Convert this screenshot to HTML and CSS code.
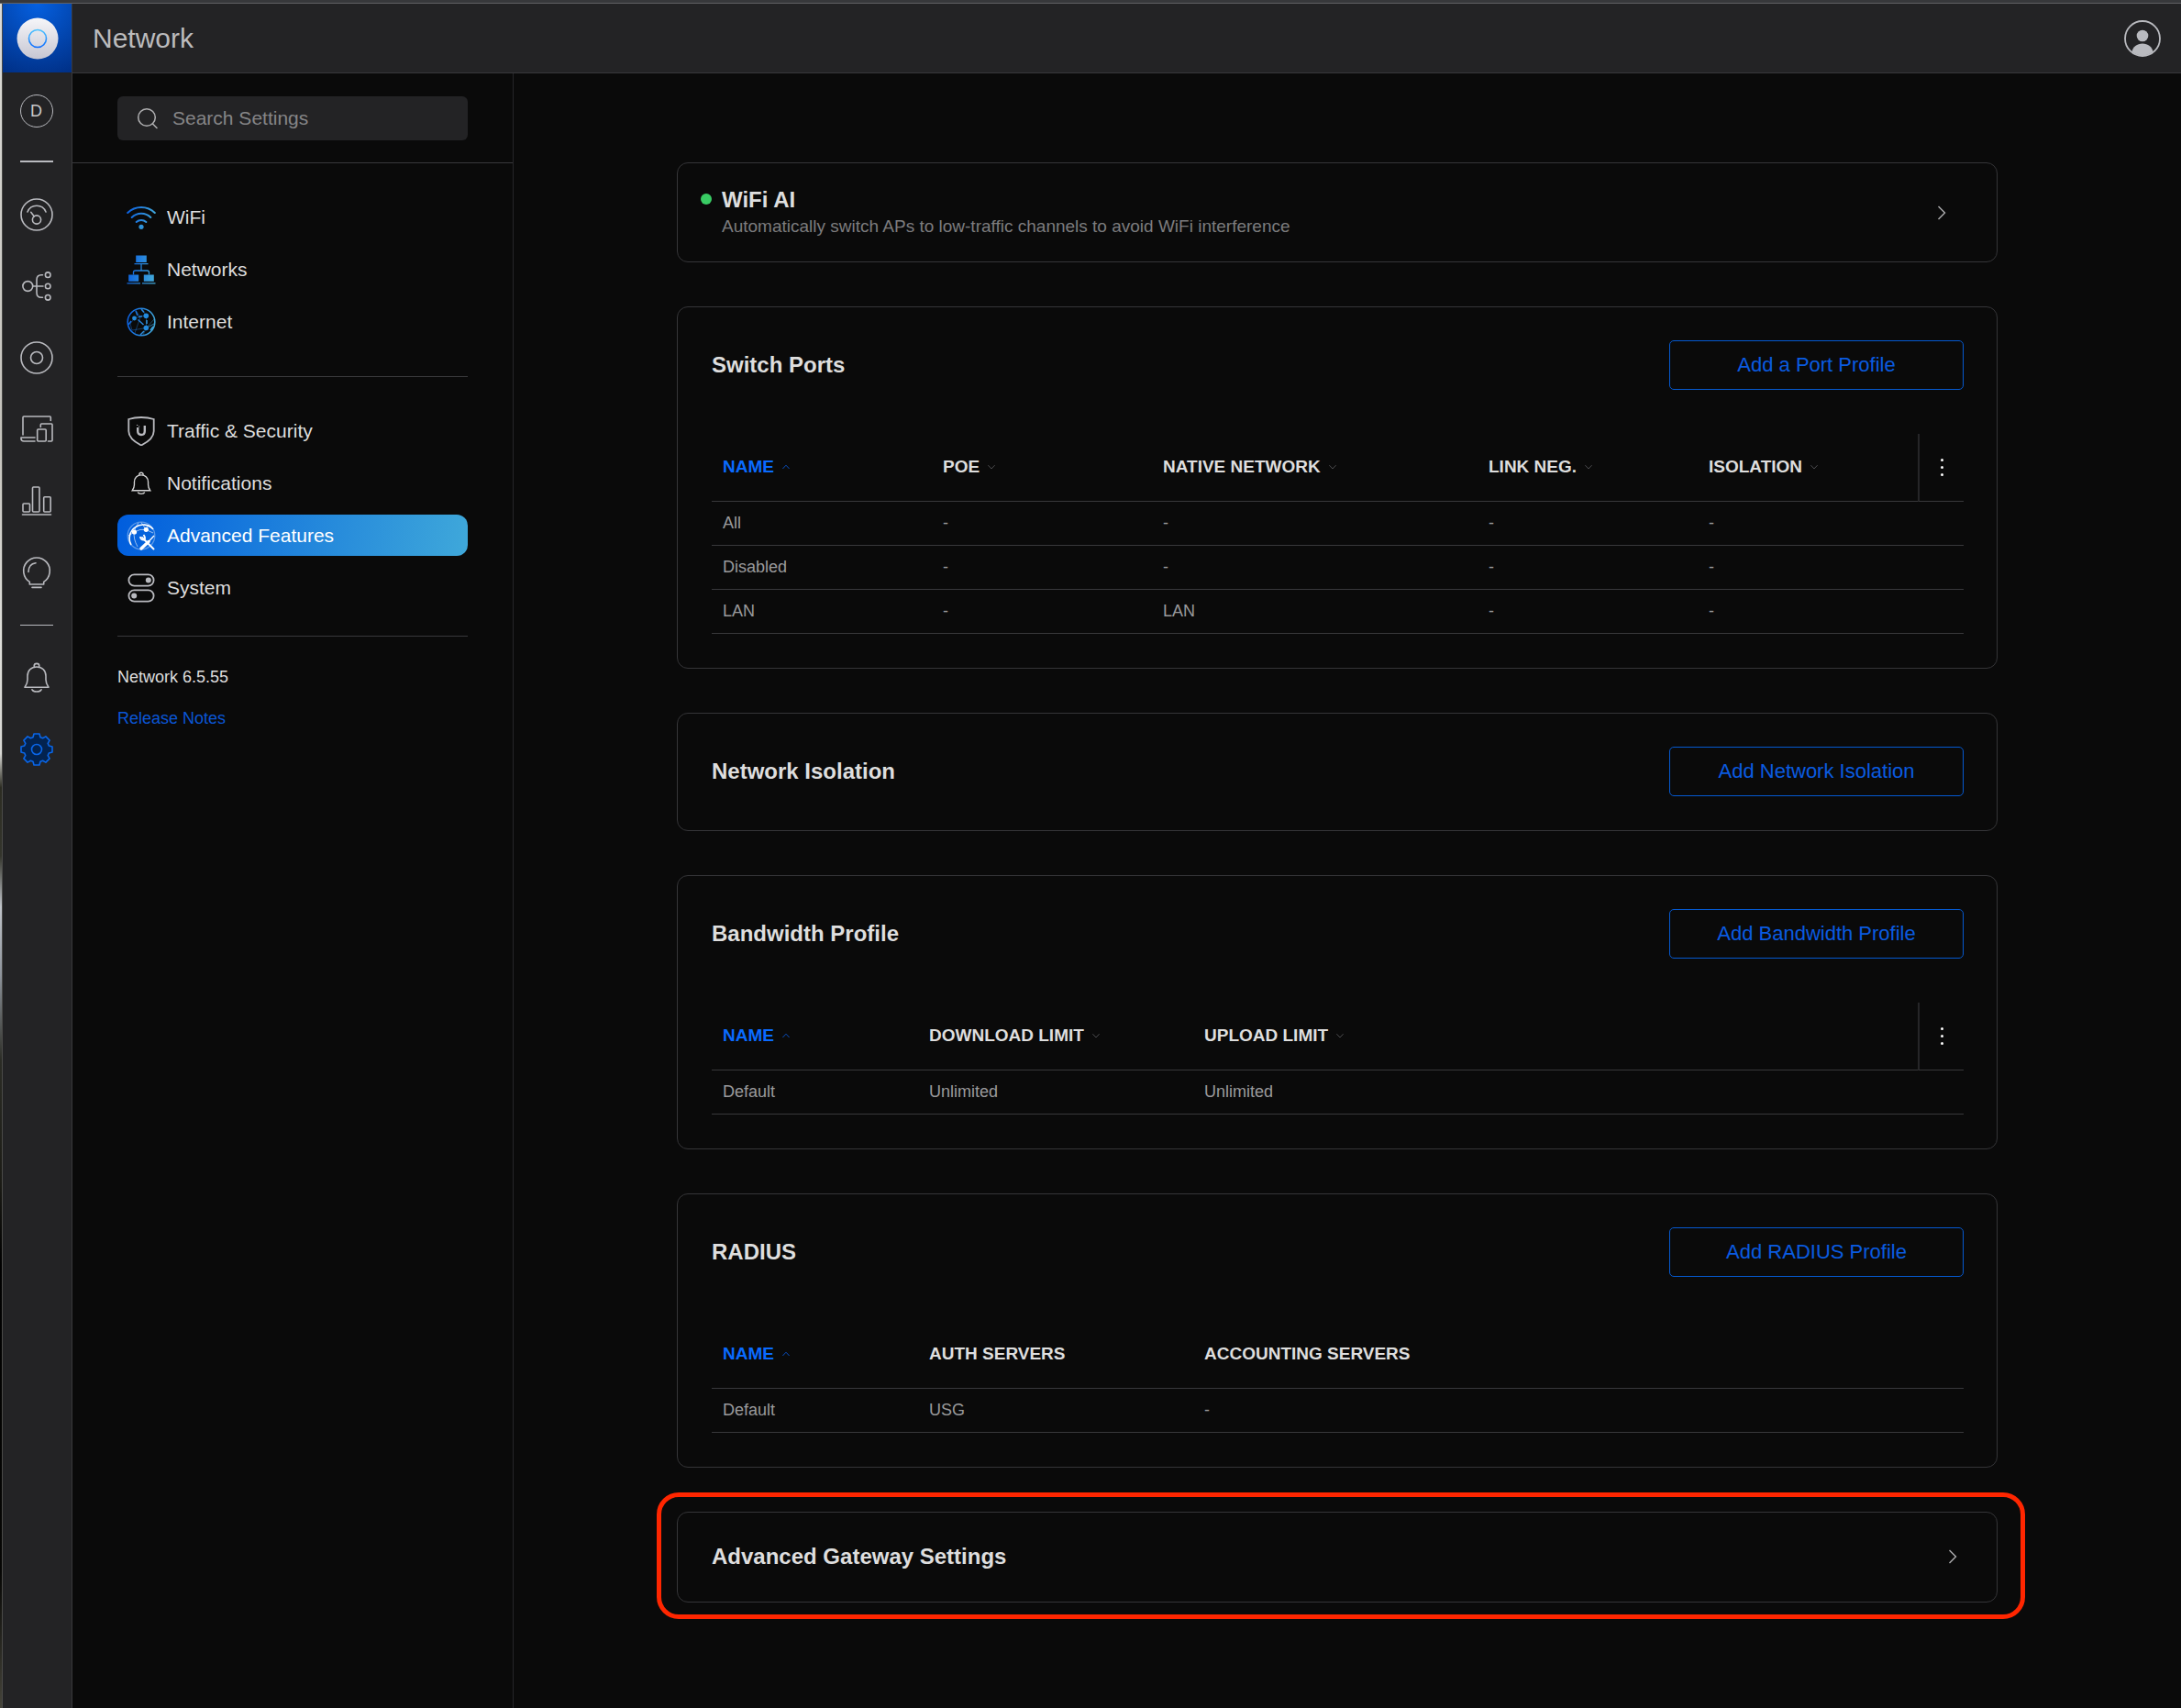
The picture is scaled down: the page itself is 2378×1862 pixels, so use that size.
FILE: index.html
```html
<!DOCTYPE html>
<html lang="en">
<head>
    <meta charset="UTF-8">
    <meta name="viewport" content="width=device-width, initial-scale=1.0">
    <title>Network - Advanced Features</title>
    <link rel="stylesheet" href="styles.css">
</head>
<body>
    <!-- Shared icons -->
    <svg class="sprite" aria-hidden="true">
        <defs>
            <linearGradient id="blue" gradientUnits="userSpaceOnUse" x1="-15" y1="0" x2="15" y2="4">
                <stop offset="0" stop-color="#0c62e0"/>
                <stop offset="1" stop-color="#42a9da"/>
            </linearGradient>
            <linearGradient id="ring" x1="0" y1="0" x2="0" y2="1">
                <stop offset="0" stop-color="#4cc3ff"/>
                <stop offset="1" stop-color="#0a6cff"/>
            </linearGradient>
            <linearGradient id="disc" x1="0" y1="0" x2="0" y2="1">
                <stop offset="0" stop-color="#f6f6f9"/>
                <stop offset="1" stop-color="#c6c6d2"/>
            </linearGradient>
        </defs>
        <symbol id="bell" viewBox="-18 -18 36 36">
            <path d="M-13 10.3H13C11 7.5 10 6 10 2V-2C10 -8 6 -12 0 -12S-10 -8 -10 -2V2C-10 6 -11 7.5 -13 10.3ZM-2.8 -12.2V-13A2.8 2.6 0 0 1 2.8 -13V-12.2M-5 12.8C-3.5 15.8 3.5 15.8 5 12.8"/>
        </symbol>
        <symbol id="chevron" viewBox="-12 -12 24 24">
            <path d="M-3.5 -7L3.5 0L-3.5 7"/>
        </symbol>
        <symbol id="caret-up" viewBox="-4 -4 8 8">
            <path d="M-3.6 2L0 -1.8L3.6 2"/>
        </symbol>
        <symbol id="caret-down" viewBox="-4 -4 8 8">
            <path d="M-3.6 -1.8L0 2L3.6 -1.8"/>
        </symbol>
    </svg>

    <div class="window-top"></div>
    <div class="app">
        <div class="window-edge"></div>

        <div class="rail">
            <a href="#" class="logo" aria-label="Home">
                <svg viewBox="-23 -23 46 46" width="46" height="46">
                    <circle r="22.5" fill="url(#disc)"/>
                    <circle r="9.5" fill="none" stroke="url(#ring)" stroke-width="1.6"/>
                </svg>
            </a>
            <nav class="rail-nav">
                <a href="#" class="site">D</a>
                <span class="rail-divider thick"></span>
                <div class="rail-group">
                    <a href="#" aria-label="Dashboard"><svg class="rail-icon" viewBox="-18 -18 36 36"><circle r="17"/><path d="M-10 -3A10.8 10.8 0 0 1 10 -3M-6.3 -2.7L-2.7 2"/><circle cy="5.5" r="4.6"/></svg></a>
                    <a href="#" aria-label="Topology"><svg class="rail-icon" viewBox="-18 -18 36 36"><circle cx="-9.7" r="5.4"/><path d="M-4.3 0H7M6.5 -12.3H5Q0 -12.3 0 -7V7Q0 12.3 5 12.3H6.5"/><circle cx="12.2" cy="-12.3" r="2.8"/><circle cx="12.2" r="2.8"/><circle cx="12.2" cy="12.3" r="2.8"/></svg></a>
                    <a href="#" aria-label="Devices"><svg class="rail-icon" viewBox="-18 -18 36 36"><circle r="17"/><circle r="6.5"/></svg></a>
                    <a href="#" aria-label="Clients"><svg class="rail-icon" viewBox="-18 -18 36 36"><path d="M-15 6V-13Q-15 -14 -14 -14H14.3Q15.3 -14 15.3 -13V-9.5M-2 9H-17V10Q-17 13 -14 13H-2M4.3 -2.5V-5Q4.3 -6 5.3 -6H16Q17 -6 17 -5V12Q17 13 16 13H12.5"/><rect x=".7" width="9.5" height="13" rx="1"/></svg></a>
                    <a href="#" aria-label="Statistics"><svg class="rail-icon" viewBox="-18 -18 36 36"><rect x="-15" y="3" width="7.5" height="9" rx="1"/><rect x="-4.5" y="-15" width="7.5" height="27" rx="1"/><rect x="7.7" y="-4.3" width="7.5" height="16.3" rx="1"/><path d="M-15.5 15H15.5"/></svg></a>
                    <a href="#" aria-label="Insights"><svg class="rail-icon" viewBox="-18 -18 36 36"><path d="M-7.7 13V10.3A14.3 14.3 0 1 1 7.7 10.3V13ZM-5 16.4H5M-9 -.5C-9 -6 -6 -9.5 -1 -10.2"/></svg></a>
                </div>
                <span class="rail-divider"></span>
                <div class="rail-group">
                    <a href="#" aria-label="Notifications"><svg class="rail-icon"><use href="#bell"/></svg></a>
                    <a href="#" aria-label="Settings"><svg class="rail-icon current" viewBox="-18 -18 36 36"><path d="M13.3 -4L17 -3V3L13.3 4L12.2 6.6L14.1 9.9L9.9 14.1L6.6 12.2L4 13.3L3 17H-3L-4 13.3L-6.6 12.2L-9.9 14.1L-14.1 9.9L-12.2 6.6L-13.3 4L-17 3V-3L-13.3 -4L-12.2 -6.6L-14.1 -9.9L-9.9 -14.1L-6.6 -12.2L-4 -13.3L-3 -17H3L4 -13.3L6.6 -12.2L9.9 -14.1L14.1 -9.9L12.2 -6.6Z"/><circle r="5.5"/></svg></a>
                </div>
            </nav>
        </div>

        <div class="page">
            <header class="topbar">
                <h1>Network</h1>
                <button class="avatar" type="button" aria-label="Account">
                    <svg viewBox="-20 -20 40 40" width="40" height="40">
                        <circle r="19" fill="none" stroke="#b9babf" stroke-width="1.8"/>
                        <circle cy="-3" r="6.3" fill="#b9babf"/>
                        <path d="M-11.5 14.5C-10.5 9 -6 5.5 0 5.5S10.5 9 11.5 14.5A18.5 18.5 0 0 1 -11.5 14.5Z" fill="#b9babf"/>
                    </svg>
                </button>
            </header>

            <div class="content">
                <aside class="sidebar">
                    <div class="search-area">
                        <label class="search">
                            <svg viewBox="0 0 24 24" width="24" height="24"><circle cx="11" cy="11" r="9.3"/><path d="M17.5 18L22 22.5"/></svg>
                            <input type="text" placeholder="Search Settings" aria-label="Search Settings">
                        </label>
                    </div>

                    <nav class="menu">
                        <a href="#" class="menu-item">
                            <svg viewBox="-16 -16 32 32" fill="none" stroke="url(#blue)" stroke-width="2" stroke-linecap="round"><path d="M-14.8 -5A21 21 0 0 1 14.8 -5M-10.3 0A14.5 14.5 0 0 1 10.3 0M-5.3 5A7.8 7.8 0 0 1 5.3 5"/><circle cy="10.3" r="2.6" fill="#2f93da" stroke="none"/></svg>
                            WiFi
                        </a>
                        <a href="#" class="menu-item">
                            <svg viewBox="-16 -16 32 32" fill="url(#blue)"><path d="M-5.8 -15.5H5.8V-8H-5.8ZM-7.5 -7H7.5V-5.8H-7.5ZM-13.8 5.5H-2.8V12.8H-13.8ZM2.8 5.5H13.8V12.8H2.8ZM-15.5 14.2H-1V15.5H-15.5ZM1 14.2H15.5V15.5H1Z"/><path d="M0 -6V1M-8.5 5.5V3Q-8.5 1 -6.5 1H6.5Q8.5 1 8.5 3V5.5" fill="none" stroke="url(#blue)" stroke-width="1.3"/></svg>
                            Networks
                        </a>
                        <a href="#" class="menu-item">
                            <svg viewBox="-16 -16 32 32" fill="none" stroke="url(#blue)"><circle r="14.8" stroke-width="1.6"/><path d="M-7.5 -4L0 -6.3L5.5 -6.5M-7.5 -4L-12 2L-10 9L5.5 6.5L14 2L5.5 6.5L2 14M5.5 -6.5V6.5M-6 -13L-1 -5L-7 12M5.5 -6.5L1 -14M5.5 6.5L14 -3" stroke-width=".7" opacity=".6"/><path d="M-3.5 -2.5L2.5 3M-4 -7L-6 -12M0 -14L3 -10.5M10 9L13 5M3 10L-1 14M-14 3L-11 -1M-3 -5.5L1 -6.3M6 -2V2" stroke-width="1.5"/><g fill="#238ade" stroke="none"><circle cx="-7.5" cy="-4" r="2.4"/><circle cx="5.3" cy="-6.7" r="2.8"/><circle cx="5.3" cy="6.5" r="2.8"/></g></svg>
                            Internet
                        </a>
                    </nav>
                    <hr>
                    <nav class="menu lower">
                        <a href="#" class="menu-item">
                            <svg viewBox="-16 -16 32 32" fill="none" stroke="#b9babf"><path d="M0 -15C5 -15 9 -14.5 13.7 -13V0C13.7 7 8 11.5 0 15.5C-8 11.5 -13.7 7 -13.7 0V-13C-9 -14.5 -5 -15 0 -15Z" stroke-width="1.8"/><path d="M-3.8 -4V0Q-3.8 4 0 4Q3.8 4 3.8 0V-6" stroke-width="2.4"/><path d="M-5 -6.5H-3.8M-3 -5H-1.8" stroke-width="1"/></svg>
                            Traffic &amp; Security
                        </a>
                        <a href="#" class="menu-item">
                            <svg viewBox="-20 -20 40 40" fill="none" stroke="#d5d5d6" stroke-width="1.8"><use href="#bell" x="-17" y="-17" width="34" height="34"/></svg>
                            Notifications
                        </a>
                        <a href="#" class="menu-item active">
                            <svg viewBox="-16 -16 32 32" fill="none" stroke="#fff"><circle r="14.8" stroke-width="1.3" opacity=".35"/><path d="M-11 10A14.8 14.8 0 0 1 13 -7" stroke-width="1.6"/><path d="M-7.5 -4Q-1 -8 5.3 -6.5L13 -3M-7.5 -4L-14 0M-7.5 -4Q-9 3 -4 12M-3 -14Q-7 -10 -7.5 -4M5.3 -6.5L0 -14.5M5.3 -6.5L8 -12" stroke-width="1" opacity=".6"/><path d="M1 2L13.5 14.5" stroke-width="2" stroke-linecap="round"/><path d="M14 0L8 6.5" stroke-width="1.3"/><path d="M8 6.5L0 14" stroke-width="3.4" stroke-linecap="round"/><path d="M-1 1Q-1 5 3.5 4.5Q5 2 2.5 -1" stroke-width="1.8"/><g fill="#fff" stroke="none"><circle cx="-7.5" cy="-4" r="2.6"/><circle cx="5.3" cy="-6.7" r="2.6"/></g></svg>
                            Advanced Features
                        </a>
                        <a href="#" class="menu-item">
                            <svg viewBox="-16 -16 32 32" fill="none" stroke="#b9babf" stroke-width="1.8"><rect x="-13.6" y="-14.6" width="27.2" height="12.2" rx="6"/><rect x="-13.6" y="2.4" width="27.2" height="12.2" rx="6"/><g fill="#b9babf" stroke="none"><circle cx="7.8" cy="-8.5" r="3"/><circle cx="-7.8" cy="8.5" r="3"/></g></svg>
                            System
                        </a>
                    </nav>
                    <hr>
                    <div class="version">
                        <p>Network 6.5.55</p>
                        <a href="#">Release Notes</a>
                    </div>
                </aside>

                <main class="main">
                    <div class="cards">
                        <section class="card card-link wifi-ai">
                            <span class="status-dot"></span>
                            <div class="card-text">
                                <h2>WiFi AI</h2>
                                <p>Automatically switch APs to low-traffic channels to avoid WiFi interference</p>
                            </div>
                            <button class="open" type="button" aria-label="Open WiFi AI"><svg><use href="#chevron"/></svg></button>
                        </section>

                        <section class="card">
                            <div class="card-header">
                                <h2>Switch Ports</h2>
                                <button class="add" type="button">Add a Port Profile</button>
                            </div>
                            <table>
                                <colgroup>
                                    <col class="col-md"><col class="col-md"><col><col class="col-md"><col class="col-md"><col class="col-menu">
                                </colgroup>
                                <thead>
                                    <tr>
                                        <th><button class="sort sorted" type="button">NAME <svg><use href="#caret-up"/></svg></button></th>
                                        <th><button class="sort" type="button">POE <svg><use href="#caret-down"/></svg></button></th>
                                        <th><button class="sort" type="button">NATIVE NETWORK <svg><use href="#caret-down"/></svg></button></th>
                                        <th><button class="sort" type="button">LINK NEG. <svg><use href="#caret-down"/></svg></button></th>
                                        <th><button class="sort" type="button">ISOLATION <svg><use href="#caret-down"/></svg></button></th>
                                        <th class="menu-cell"><button class="dots" type="button" aria-label="Columns"><i></i><i></i><i></i></button></th>
                                    </tr>
                                </thead>
                                <tbody>
                                    <tr><td>All</td><td>-</td><td>-</td><td>-</td><td>-</td><td></td></tr>
                                    <tr><td>Disabled</td><td>-</td><td>-</td><td>-</td><td>-</td><td></td></tr>
                                    <tr><td>LAN</td><td>-</td><td>LAN</td><td>-</td><td>-</td><td></td></tr>
                                </tbody>
                            </table>
                        </section>

                        <section class="card">
                            <div class="card-header">
                                <h2>Network Isolation</h2>
                                <button class="add" type="button">Add Network Isolation</button>
                            </div>
                        </section>

                        <section class="card">
                            <div class="card-header">
                                <h2>Bandwidth Profile</h2>
                                <button class="add" type="button">Add Bandwidth Profile</button>
                            </div>
                            <table>
                                <colgroup>
                                    <col class="col-sm"><col class="col-lg"><col><col class="col-menu">
                                </colgroup>
                                <thead>
                                    <tr>
                                        <th><button class="sort sorted" type="button">NAME <svg><use href="#caret-up"/></svg></button></th>
                                        <th><button class="sort" type="button">DOWNLOAD LIMIT <svg><use href="#caret-down"/></svg></button></th>
                                        <th><button class="sort" type="button">UPLOAD LIMIT <svg><use href="#caret-down"/></svg></button></th>
                                        <th class="menu-cell"><button class="dots" type="button" aria-label="Columns"><i></i><i></i><i></i></button></th>
                                    </tr>
                                </thead>
                                <tbody>
                                    <tr><td>Default</td><td>Unlimited</td><td>Unlimited</td><td></td></tr>
                                </tbody>
                            </table>
                        </section>

                        <section class="card">
                            <div class="card-header">
                                <h2>RADIUS</h2>
                                <button class="add" type="button">Add RADIUS Profile</button>
                            </div>
                            <table>
                                <colgroup>
                                    <col class="col-sm"><col class="col-lg"><col>
                                </colgroup>
                                <thead>
                                    <tr>
                                        <th><button class="sort sorted" type="button">NAME <svg><use href="#caret-up"/></svg></button></th>
                                        <th>AUTH SERVERS</th>
                                        <th>ACCOUNTING SERVERS</th>
                                    </tr>
                                </thead>
                                <tbody>
                                    <tr><td>Default</td><td>USG</td><td>-</td></tr>
                                </tbody>
                            </table>
                        </section>

                        <section class="card card-link gateway">
                            <h2>Advanced Gateway Settings</h2>
                            <button class="open" type="button" aria-label="Open Advanced Gateway Settings"><svg><use href="#chevron"/></svg></button>
                            <span class="highlight"></span>
                        </section>
                    </div>
                </main>
            </div>
        </div>
    </div>
</body>
</html>
```

FILE: styles.css
```css
* {
    margin: 0;
    padding: 0;
    box-sizing: border-box;
}

body {
    font-family: "Liberation Sans", Arial, sans-serif;
    font-size: 18px;
    min-height: 100vh;
    display: flex;
    flex-direction: column;
    background-color: #0a0a0a;
    color: #dedede;
}

a {
    color: inherit;
    text-decoration: none;
}

button {
    font-family: inherit;
    background: none;
    border: none;
    color: inherit;
    cursor: pointer;
}

svg {
    display: block;
    flex-shrink: 0;
}

.sprite {
    position: absolute;
    width: 0;
    height: 0;
}

.window-top {
    height: 4px;
    background-color: #37383b;
    border-bottom: 1px solid #606164;
}

.app {
    flex: 1;
    display: flex;
}

/* Sliver of desktop beside the window */
.window-edge {
    width: 3px;
    border-right: 1px solid #4a4a48;
    background: linear-gradient(#dcdcd8 0%, #c4c2bc 25%, #dededa 37%, #d8d8d4 44%, #2c2c22 46%, #34352c 50%, #c0c4ca 53%, #8e949c 57%, #2b2c25 62%, #1c1c16 69%, #000 74%, #060604 92%, #45443a 100%);
}

/* Icon rail */
.rail {
    width: 76px;
    flex-shrink: 0;
    background-color: #232325;
    border-right: 1px solid #38383b;
}

.logo {
    height: 75px;
    display: flex;
    align-items: center;
    justify-content: center;
    background: radial-gradient(circle at 50% 0, #0560e0, #002f85);
}

.rail-nav {
    display: flex;
    flex-direction: column;
    align-items: center;
    padding: 24px 2px 0 0;
}

.site {
    width: 36px;
    height: 36px;
    border: 1px solid #b9babf;
    border-radius: 50%;
    display: flex;
    align-items: center;
    justify-content: center;
    color: #c8c8ca;
}

.rail-divider {
    width: 36px;
    height: 1px;
    margin: 39px 0;
    background-color: #b9babf;
}

.rail-divider.thick {
    height: 2px;
    margin-top: 36px;
}

.rail-group {
    display: flex;
    flex-direction: column;
    gap: 42px;
}

.rail-icon {
    width: 36px;
    height: 36px;
    fill: none;
    stroke: #b9babf;
    stroke-width: 1.6;
    stroke-linecap: round;
    stroke-linejoin: round;
}

.rail-icon.current {
    stroke: #0a66e8;
    fill: #03234f;
}

/* Top bar */
.page {
    flex: 1;
    display: flex;
    flex-direction: column;
    min-width: 0;
}

.topbar {
    height: 76px;
    padding: 0 22px;
    display: flex;
    align-items: center;
    justify-content: space-between;
    background-color: #232325;
    border-bottom: 1px solid #38383b;
}

.topbar h1 {
    font-size: 30px;
    font-weight: normal;
    color: #bbbbbd;
}

.content {
    flex: 1;
    display: flex;
}

/* Settings menu */
.sidebar {
    width: 481px;
    flex-shrink: 0;
    border-right: 1px solid #262628;
}

.search-area {
    padding: 25px 49px 24px;
    border-bottom: 1px solid #38383b;
}

.search {
    height: 48px;
    padding: 0 21px;
    display: flex;
    align-items: center;
    gap: 15px;
    border-radius: 6px;
    background-color: #232325;
}

.search svg {
    fill: none;
    stroke: #b0b0b2;
    stroke-width: 1.5;
    stroke-linecap: round;
}

.search input {
    flex: 1;
    min-width: 0;
    font-family: inherit;
    font-size: 21px;
    color: #dedede;
    background: none;
    border: none;
    outline: none;
}

.search input::placeholder {
    color: #858587;
    opacity: 1;
}

.menu {
    padding: 36px 49px 0;
    display: flex;
    flex-direction: column;
    gap: 12px;
}

.menu-item {
    height: 45px;
    padding: 0 10px;
    display: flex;
    align-items: center;
    gap: 12px;
    border-radius: 12px;
    font-size: 21px;
}

.menu-item svg {
    width: 32px;
    height: 32px;
}

.menu-item.active {
    color: #fff;
    background: linear-gradient(100deg, #005ddd, #3fa8da);
}

.sidebar hr {
    margin: 37px 49px 0;
    border: none;
    border-top: 1px solid #38383b;
}

.sidebar .lower + hr {
    margin-top: 30px;
}

.version {
    padding: 32px 49px 0;
    display: flex;
    flex-direction: column;
    gap: 21px;
    line-height: 24px;
}

.version a {
    color: #0a56d6;
}

/* Cards */
.main {
    flex: 1;
    min-width: 0;
    padding: 97px 22px 48px 0;
}

.cards {
    max-width: 1440px;
    margin: 0 auto;
    display: flex;
    flex-direction: column;
    gap: 48px;
}

.card {
    padding: 36px 36px 37px 37px;
    border: 1px solid #353538;
    border-radius: 12px;
}

.card h2 {
    font-size: 24px;
    line-height: 30px;
}

.card-header {
    display: flex;
    align-items: center;
    justify-content: space-between;
}

.add {
    width: 321px;
    height: 54px;
    border: 1px solid #0559d0;
    border-radius: 5px;
    font-size: 22px;
    color: #0a5be0;
}

.card-link {
    display: flex;
    align-items: center;
}

.open {
    margin-left: auto;
}

.open svg {
    width: 24px;
    height: 24px;
    fill: none;
    stroke: #b0b0b2;
    stroke-width: 1.4;
}

.wifi-ai {
    padding: 25px 48px 24px 25px;
    gap: 11px;
}

.status-dot {
    width: 12px;
    height: 12px;
    margin-top: 8px;
    align-self: flex-start;
    border-radius: 50%;
    background-color: #39cc64;
}

.card-text p {
    font-size: 19px;
    line-height: 28px;
    color: #7c7c7e;
}

.gateway {
    position: relative;
    padding-top: 33px;
    padding-bottom: 34px;
}

/* Red callout drawn round the card */
.highlight {
    position: absolute;
    inset: -22px -31px -19px -23px;
    border: 5px solid #ff2600;
    border-radius: 24px;
    pointer-events: none;
}

/* Tables */
table {
    width: 100%;
    margin-top: 48px;
    table-layout: fixed;
    border-collapse: separate;
    border-spacing: 0;
}

.col-sm {
    width: 225px;
}

.col-md {
    width: 240px;
}

.col-lg {
    width: 300px;
}

.col-menu {
    width: 50px;
}

th,
td {
    padding: 0 12px;
    text-align: left;
    border-bottom: 1px solid #38383b;
}

th {
    height: 74px;
    padding-bottom: 2px;
    font-size: 19px;
}

td {
    height: 48px;
    color: #9a9a9c;
}

.sort {
    display: flex;
    align-items: center;
    gap: 9px;
    font-size: 19px;
    font-weight: bold;
}

.sort svg {
    width: 8px;
    height: 8px;
    fill: none;
    stroke: #4c4c4f;
    stroke-width: 1;
}

.sort.sorted {
    color: #0a6bff;
}

.sort.sorted svg {
    stroke: #0a4fc0;
}

.menu-cell {
    padding: 0;
    border-left: 2px solid #262628;
}

.dots {
    width: 48px;
    height: 48px;
    display: flex;
    flex-direction: column;
    align-items: center;
    justify-content: center;
    gap: 5px;
}

.dots i {
    width: 3px;
    height: 3px;
    border-radius: 50%;
    background-color: #fff;
}
```
